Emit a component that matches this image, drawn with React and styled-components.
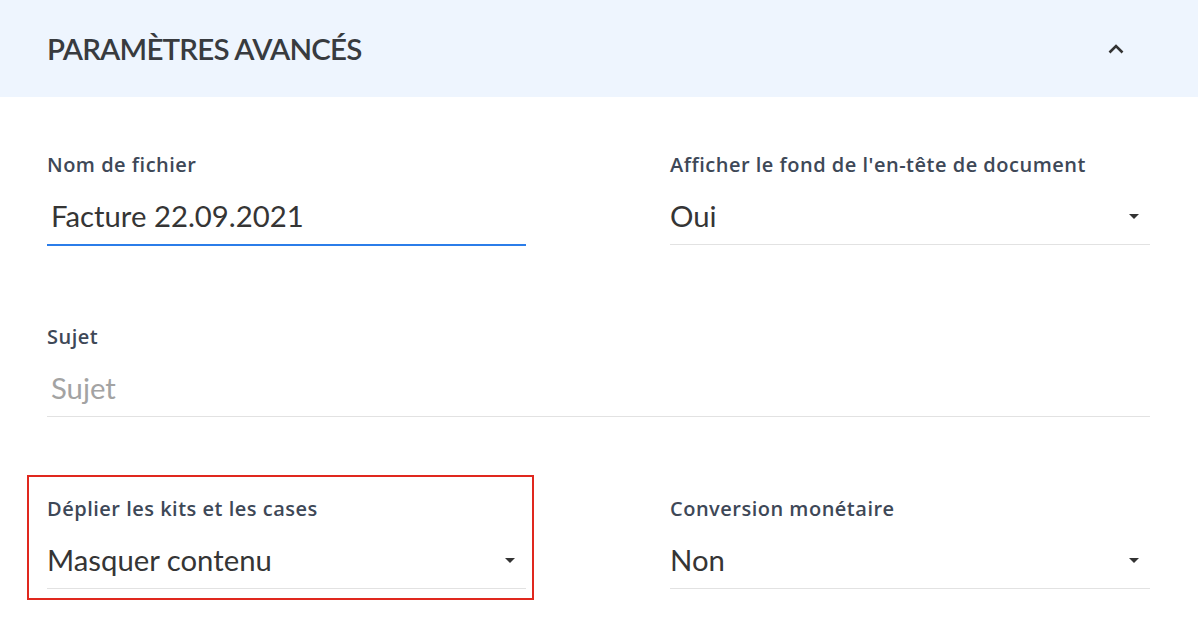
import React from "react";
import styled, { createGlobalStyle } from "styled-components";

const Global = createGlobalStyle`
  html, body { margin: 0; padding: 0; background: #ffffff; }
  body { font-family: Lato, "Noto Sans", "Liberation Sans", sans-serif; }
  * { box-sizing: border-box; }
`;

const Panel = styled.section`
  width: 1198px;
  background: #ffffff;
`;

const Header = styled.header`
  height: 97px;
  background: #eef5fe;
  display: flex;
  align-items: center;
  justify-content: space-between;
  padding: 0 70px 0 47px;
`;

const Title = styled.h2`
  margin: 0;
  font-size: 29.5px;
  font-weight: 600;
  color: #383b3f;
  letter-spacing: -0.8px;
`;

const ToggleButton = styled.button`
  width: 24px;
  height: 24px;
  padding: 0;
  border: 0;
  background: transparent;
  display: flex;
  align-items: center;
  justify-content: center;
  color: #333;
`;

const Form = styled.div`
  display: grid;
  grid-template-columns: 479px 480px;
  column-gap: 144px;
  row-gap: 80px;
  padding: 56px 48px 40px 47px;
`;

const Field = styled.div`
  position: relative;
  grid-column: ${(p) => (p.$wide ? "1 / -1" : "auto")};
  ${(p) =>
    p.$highlight &&
    `
    &::after {
      content: "";
      position: absolute;
      top: -22px;
      left: -20px;
      right: -8px;
      bottom: -11px;
      border: 2px solid #e0281e;
      pointer-events: none;
    }
  `}
`;

const Label = styled.label`
  display: block;
  font-family: "Open Sans", Lato, sans-serif;
  font-size: 20px;
  line-height: 24px;
  font-weight: 600;
  letter-spacing: 0.5px;
  color: #3e4857;
`;

const Control = styled.div`
  display: flex;
  align-items: center;
  justify-content: space-between;
  padding: 21px 0 10px ${(p) => (p.$input ? "4px" : "0")};
  border-bottom: ${(p) => (p.$focused ? "2px solid #2b7de9" : "1px solid #e2e2e2")};
  margin-bottom: ${(p) => (p.$focused ? "-1px" : "0")};
  font-size: 29.3px;
  line-height: 36px;
  color: ${(p) => (p.$placeholder ? "#a3a3a3" : "#353535")};
`;

const Caret = styled.span`
  width: 0;
  height: 0;
  margin-right: 11px;
  border-left: 5px solid transparent;
  border-right: 5px solid transparent;
  border-top: 5px solid #333;
`;

function TextField({ label, value, placeholder, focused, wide }) {
  return (
    <Field $wide={wide}>
      <Label>{label}</Label>
      <Control $input $focused={focused} $placeholder={!value}>
        {value || placeholder}
      </Control>
    </Field>
  );
}

function SelectField({ label, value, highlight }) {
  return (
    <Field $highlight={highlight}>
      <Label>{label}</Label>
      <Control>
        <span>{value}</span>
        <Caret />
      </Control>
    </Field>
  );
}

export default function App() {
  return (
    <Panel>
      <Global />
      <Header>
        <Title>PARAMÈTRES AVANCÉS</Title>
        <ToggleButton aria-label="Réduire">
          <svg width="16" height="10" viewBox="0 0 16 10" fill="none">
            <path d="M1.5 8.5 L8 2 L14.5 8.5" stroke="#333" strokeWidth="2.6" />
          </svg>
        </ToggleButton>
      </Header>
      <Form>
        <TextField label="Nom de fichier" value="Facture 22.09.2021" focused />
        <SelectField label="Afficher le fond de l'en-tête de document" value="Oui" />
        <TextField label="Sujet" placeholder="Sujet" wide />
        <SelectField label="Déplier les kits et les cases" value="Masquer contenu" highlight />
        <SelectField label="Conversion monétaire" value="Non" />
      </Form>
    </Panel>
  );
}
